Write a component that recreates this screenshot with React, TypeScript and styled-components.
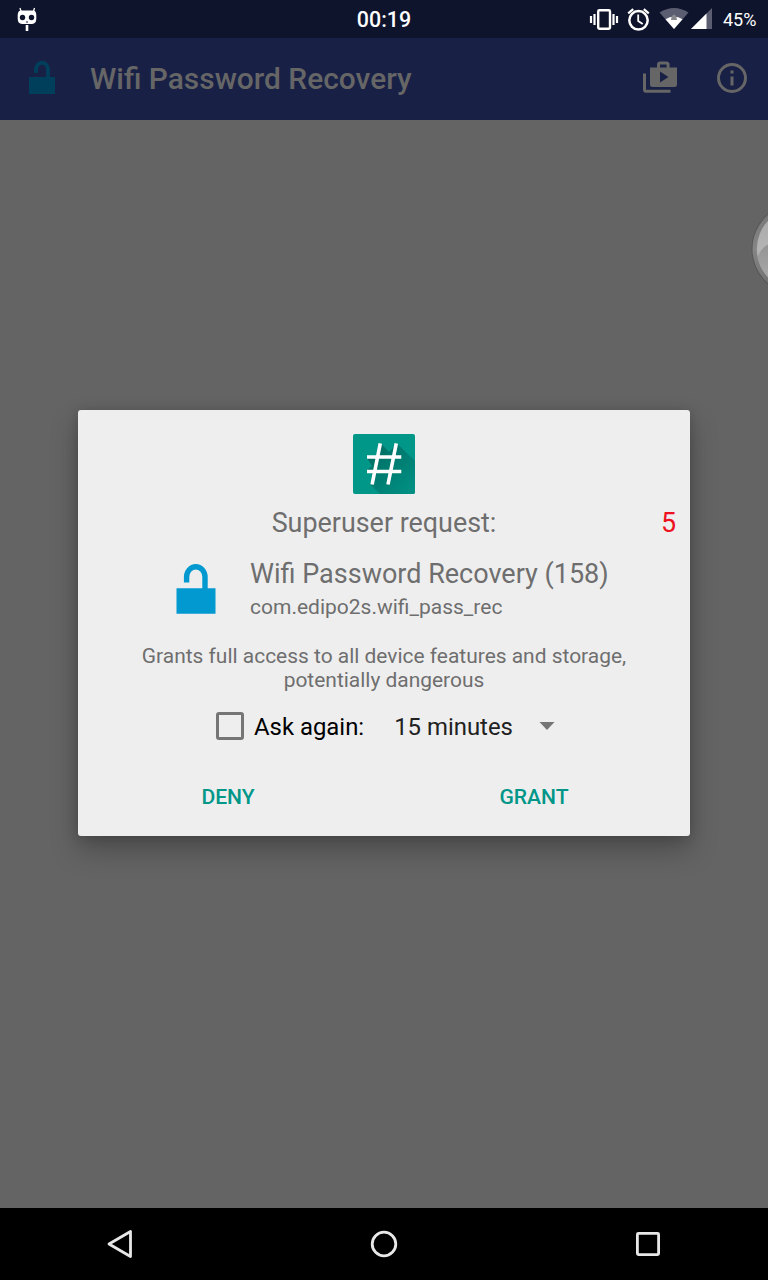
import React from "react";
import styled, { createGlobalStyle } from "styled-components";

const GlobalStyle = createGlobalStyle`
  * { box-sizing: border-box; }
  body { margin: 0; background: #646464; font-family: Roboto, "Liberation Sans", sans-serif; }
  svg { display: block; flex: none; }
`;

const Screen = styled.div`
  position: relative;
  display: flex;
  flex-direction: column;
  width: 768px;
  height: 1280px;
  overflow: hidden;
  background: #646464;
`;

const StatusBar = styled.header`
  display: grid;
  grid-template-columns: 1fr auto 1fr;
  align-items: center;
  height: 38px;
  padding: 0 11px 0 16px;
  background: #0f142d;
  color: #fff;
`;

const Clock = styled.span`
  margin-right: 5px;
  padding-top: 1px;
  font-size: 21.4px;
  font-weight: 500;
  line-height: 37px;
`;

const StatusIcons = styled.div`
  display: flex;
  justify-content: flex-end;
  align-items: center;
`;

const Battery = styled.span`
  font-size: 18px;
  line-height: 36px;
  width: 34px;
  margin-left: 10px;
  padding-top: 2px;
  white-space: nowrap;
`;

const AppBar = styled.div`
  display: flex;
  align-items: center;
  height: 82px;
  padding: 0 20px 0 28px;
  background: #192046;
  color: #666666;
`;

const AppTitle = styled.h1`
  flex: 1;
  margin: 0 0 0 34px;
  font-size: 29.9px;
  font-weight: 500;
  line-height: 82px;
`;

const AppBarActions = styled.div`
  display: flex;
  align-items: center;
  gap: 38px;
`;

const Content = styled.main`
  flex: 1;
`;

const NavBar = styled.nav`
  display: grid;
  grid-template-columns: 240px 288px 240px;
  justify-items: center;
  align-items: center;
  height: 72px;
  background: #000;
`;

const FloatingBubble = styled.div`
  position: absolute;
  right: 0;
  top: 200px;
`;

const Overlay = styled.div`
  position: absolute;
  inset: 0;
  padding: 410px 78px 0;
`;

const Dialog = styled.section`
  display: flex;
  flex-direction: column;
  align-items: center;
  height: 426px;
  padding-top: 24px;
  border-radius: 3px;
  background: #eeeeee;
  color: #6e6e6e;
  box-shadow: 0 14px 28px rgba(0, 0, 0, 0.26), 0 1px 12px rgba(0, 0, 0, 0.16);
`;

const RequestRow = styled.div`
  display: grid;
  grid-template-columns: 1fr auto 1fr;
  width: 100%;
  margin-top: 11px;
  padding: 0 14px;
  font-size: 26.9px;
  line-height: 36px;
`;

const Countdown = styled.span`
  justify-self: end;
  color: #ee1020;
`;

const AppRow = styled.div`
  display: flex;
  align-items: center;
  width: 416px;
  height: 64px;
  margin-top: 17px;
  gap: 34px;
`;

const AppName = styled.div`
  padding-bottom: 2px;
  font-size: 27px;
  line-height: 32px;
  white-space: nowrap;
`;

const PackageName = styled.div`
  font-size: 21px;
  line-height: 30px;
  white-space: nowrap;
`;

const Warning = styled.p`
  margin: 22px 0 0;
  font-size: 20.95px;
  line-height: 24px;
  text-align: center;
`;

const OptionsRow = styled.div`
  display: flex;
  align-items: center;
  width: 339px;
  height: 36px;
  margin: 17px 0 0 3px;
  font-size: 23.9px;
  color: #000;
  white-space: nowrap;
`;

const Checkbox = styled.span`
  width: 28px;
  height: 28px;
  margin: -2px 10px 0 0;
  border: 3px solid #757575;
  border-radius: 3px;
`;

const Duration = styled.span`
  flex: 1;
  margin-left: 30px;
  color: #212121;
`;

const Actions = styled.div`
  display: grid;
  grid-template-columns: 300px 312px;
  margin-top: 34px;
`;

const ActionButton = styled.button`
  border: 0;
  padding: 0;
  background: none;
  font: 500 21.1px/36px Roboto, sans-serif;
  color: #009688;
`;

const CidIcon = () => (
  <svg width="22" height="26" viewBox="16 6 22 26">
    <path d="M20 8l1.5 5M34.500 8l-1.500 5" stroke="#fff" strokeWidth="1.300" />
    <path d="M21 10.500h12q3.300 0 3.300 5v3q0 5-4.300 5.500h-10q-4.300-.500-4.300-5.500v-3q0-5 3.300-5z" fill="#fff" />
    <circle cx="22.500" cy="17.500" r="2.700" fill="#0f142d" />
    <circle cx="31.500" cy="17.500" r="2.700" fill="#0f142d" />
    <path d="M26 22h2" stroke="#0f142d" />
    <path d="M27 25v6" stroke="#fff" strokeWidth="2.600" />
  </svg>
);

const SystemIcons = () => (
  <svg width="124" height="30" viewBox="589 4 124 30" fill="none" stroke="#fff">
    <rect x="598.200" y="10.200" width="11.800" height="18.600" rx="1.200" strokeWidth="2.400" />
    <path d="M591 16v7M594.500 14v11M613.500 14v11M617 16v7" strokeWidth="2.200" />
    <circle cx="638.500" cy="20.300" r="9.200" strokeWidth="2.500" />
    <path d="M638.200 14.500v6.500l4.500 3" strokeWidth="1.800" />
    <path d="M628.200 13.300l5-4.200M648.800 13.300l-5-4.200" strokeWidth="2.200" />
    <path d="M659.500 12.500Q674 3.500 688.500 12.500L674 29z" fill="#5b5e70" stroke="none" />
    <path d="M665.500 19.300Q674 13.500 682.500 19.300L674 29z" fill="#fff" stroke="none" />
    <path d="M671 20q.500-5 3-5.500 2.500.500 3 5.500z" fill="#87898f" stroke="none" />
    <path d="M691 29L712 8v21z" fill="#5b5e70" stroke="none" />
    <path d="M691 29L706.500 13.500V29z" fill="#fff" stroke="none" />
  </svg>
);

const HeaderLock = () => (
  <svg width="28" height="36" viewBox="28 61 28 36">
    <path d="M29 77h26v17H29z" fill="#003f5b" />
    <path d="M36 73v-3.500a6 6.700 0 0 1 12 0V78" fill="none" stroke="#003f5b" strokeWidth="3.900" />
  </svg>
);

const DialogLock = () => (
  <svg width="40" height="64" viewBox="176 558 40 64">
    <path d="M176.500 588.200h39v25.600h-39z" fill="#0299d0" />
    <path d="M186.600 582.500v-5.500a9.200 10.300 0 0 1 18.400 0V589" fill="none" stroke="#0299d0" strokeWidth="5.400" />
  </svg>
);

const ShopIcon = () => (
  <svg width="36" height="36" viewBox="642 61 36 36" fill="none" stroke="#666666">
    <path d="M644.500 73.500v16.200q0 1.500 1.500 1.500h24.500" strokeWidth="3" />
    <path d="M658.500 69v-4.200q0-1.800 1.800-1.800h6q1.800 0 1.800 1.800V69" strokeWidth="3" />
    <path fillRule="evenodd" d="M650 67.500h27v17q0 2.500-2.500 2.500h-22q-2.500 0-2.500-2.500zM660 71.500v11l8.500-5.500z" fill="#666666" stroke="none" />
  </svg>
);

const InfoIcon = () => (
  <svg width="32" height="32" viewBox="716 63 32 32" fill="none" stroke="#666666" strokeWidth="3">
    <circle cx="732" cy="78" r="13.500" />
    <path d="M732 76.500v9M732 70.500v3" />
  </svg>
);

const SuperuserLogo = () => (
  <svg width="62" height="60" viewBox="353 434 62 60">
    <defs>
      <linearGradient id="hashShade" x1="375" y1="450" x2="413" y2="490" gradientUnits="userSpaceOnUse">
        <stop stopColor="#006f65" />
        <stop offset="1" stopColor="#009083" />
      </linearGradient>
    </defs>
    <rect x="353" y="434" width="62" height="60" rx="2" fill="#009688" />
    <path d="M381 443.500L389 452l8-8.500L415 461v31q0 2-2 2h-33l-10-10 3-9-6-5 5-4-5-8h10z" fill="url(#hashShade)" />
    <path d="M380.300 443.300l-8.200 41.200M396.300 443.300L388 484.500M367 457h34.300M367 471.500h34.300" fill="none" stroke="#fff" strokeWidth="3.600" />
  </svg>
);

const DropArrow = () => (
  <svg width="16" height="10" viewBox="0 0 16 10">
    <path d="M.5 0h15L8 8z" fill="#757575" />
  </svg>
);

const Bubble = () => (
  <svg width="20" height="100" viewBox="748 200 20 100">
    <defs>
      <linearGradient id="rim" x1="0" y1="0" x2="0" y2="1">
        <stop stopColor="#747474" />
        <stop offset=".5" stopColor="#858585" />
        <stop offset="1" stopColor="#6c6c6c" />
      </linearGradient>
      <linearGradient id="glass" x1="0" y1="0" x2="0" y2="1">
        <stop stopColor="#a8a8a8" />
        <stop offset=".5" stopColor="#b4b4b4" />
        <stop offset="1" stopColor="#8a8a8a" />
      </linearGradient>
      <linearGradient id="glassLow" x1="0" y1="0" x2="0" y2="1">
        <stop stopColor="#949494" />
        <stop offset="1" stopColor="#a8a8a8" />
      </linearGradient>
    </defs>
    <circle cx="798" cy="249" r="46.500" fill="#565656" />
    <circle cx="798" cy="249" r="45.500" fill="url(#rim)" />
    <circle cx="798" cy="249" r="41.200" fill="url(#glass)" />
    <path d="M757.500 258Q760 249 768 244.500V277.500Q761 270 757.500 258z" fill="url(#glassLow)" />
  </svg>
);

export default function App() {
  return (
    <>
      <GlobalStyle />
      <Screen>
        <StatusBar>
          <CidIcon />
          <Clock>00:19</Clock>
          <StatusIcons>
            <SystemIcons />
            <Battery>45%</Battery>
          </StatusIcons>
        </StatusBar>
        <AppBar>
          <HeaderLock />
          <AppTitle>Wifi Password Recovery</AppTitle>
          <AppBarActions>
            <ShopIcon />
            <InfoIcon />
          </AppBarActions>
        </AppBar>
        <Content />
        <NavBar>
          <svg width="28" height="32" viewBox="0 0 28 32">
            <path d="M3 16L24.500 3.500v25z" fill="none" stroke="#e8e8e8" strokeWidth="2.800" strokeLinejoin="round" />
          </svg>
          <svg width="28" height="28" viewBox="0 0 28 28">
            <circle cx="14" cy="14" r="11.800" fill="none" stroke="#e8e8e8" strokeWidth="2.800" />
          </svg>
          <svg width="24" height="24" viewBox="0 0 24 24">
            <rect x="1.400" y="1.400" width="21.200" height="21.200" rx="1" fill="none" stroke="#e8e8e8" strokeWidth="2.800" />
          </svg>
        </NavBar>
        <FloatingBubble>
          <Bubble />
        </FloatingBubble>
        <Overlay>
          <Dialog>
            <SuperuserLogo />
            <RequestRow>
              <span />
              <span>Superuser request:</span>
              <Countdown>5</Countdown>
            </RequestRow>
            <AppRow>
              <DialogLock />
              <div>
                <AppName>Wifi Password Recovery (158)</AppName>
                <PackageName>com.edipo2s.wifi_pass_rec</PackageName>
              </div>
            </AppRow>
            <Warning>
              Grants full access to all device features and storage,
              <br />
              potentially dangerous
            </Warning>
            <OptionsRow>
              <Checkbox />
              <span>Ask again:</span>
              <Duration>15 minutes</Duration>
              <DropArrow />
            </OptionsRow>
            <Actions>
              <ActionButton>DENY</ActionButton>
              <ActionButton>GRANT</ActionButton>
            </Actions>
          </Dialog>
        </Overlay>
      </Screen>
    </>
  );
}
